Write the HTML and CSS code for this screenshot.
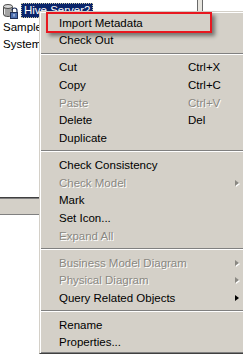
FILE: index.html
```html
<!DOCTYPE html>
<html lang="en">
<head>
  <meta charset="UTF-8" />
  <title>Context menu</title>
  <link rel="stylesheet" href="styles.css">
</head>
<body>

  <div class="top-area">
    <div class="pane-left">
      <div class="tree-row">
        <svg class="db-icon" width="16" height="16" viewBox="0 0 16 16">
          <path d="M1.5 3.5v8c0 1.2 2.2 2 4.5 2s4.5-.8 4.5-2v-8" fill="#a3a3a3" stroke="#4b4b4b"/>
          <ellipse cx="6" cy="3.5" rx="4.5" ry="2" fill="#d8d8d8" stroke="#4b4b4b"/>
          <path d="M2.5 6v5" stroke="#e6e6e6"/>
          <path d="M10 7.5a2.5 2.5 0 0 1 5 0v2" fill="none" stroke="#1f2f58" stroke-width="1.2"/>
          <rect x="8.5" y="9.5" width="7" height="6" fill="#4d6fae" stroke="#1f2f58"/>
          <rect x="11.5" y="11" width="1" height="2.5" fill="#e0e8f8"/>
        </svg>
        <span class="tree-label selected">Hive Server2</span>
      </div>
      <div class="tree-row"><span class="tree-label">Sample</span></div>
      <div class="tree-row"><span class="tree-label">System</span></div>
    </div>
    <div class="split-v"></div>
    <div class="pane-right"></div>
  </div>
  <div class="split-h"></div>
  <div class="bottom-area"></div>

  <!-- menu contextuel par-dessus l'arbre -->
  <div class="menu">
    <div class="item marked"><span>Import Metadata</span></div>
    <div class="item"><span>Check Out</span></div>
    <div class="sep"></div>
    <div class="item"><span>Cut</span><span>Ctrl+X</span></div>
    <div class="item"><span>Copy</span><span>Ctrl+C</span></div>
    <div class="item off"><span>Paste</span><span>Ctrl+V</span></div>
    <div class="item"><span>Delete</span><span>Del</span></div>
    <div class="item"><span>Duplicate</span></div>
    <div class="sep"></div>
    <div class="item"><span>Check Consistency</span></div>
    <div class="item off sub"><span>Check Model</span><span></span><i class="arrow"></i></div>
    <div class="item"><span>Mark</span></div>
    <div class="item"><span>Set Icon...</span></div>
    <div class="item off"><span>Expand All</span></div>
    <div class="sep"></div>
    <div class="item off sub"><span>Business Model Diagram</span><span></span><i class="arrow"></i></div>
    <div class="item off sub"><span>Physical Diagram</span><span></span><i class="arrow"></i></div>
    <div class="item sub"><span>Query Related Objects</span><span></span><i class="arrow"></i></div>
    <div class="sep"></div>
    <div class="item"><span>Rename</span></div>
    <div class="item"><span>Properties...</span></div>
  </div>

</body>
</html>
```

FILE: styles.css
```css
body {
  margin: 0;
  background: #fff;
  font-family: "Liberation Sans", Arial, sans-serif;
  font-size: 11.5px;
  color: #000;
  overflow: hidden;
}

/* Arbre et panneaux derrière le menu */
.top-area {
  display: flex;
  height: 197px;
}

.pane-left {
  width: 197px;
  padding-top: 2px;
}

.tree-row {
  display: flex;
  align-items: center;
  gap: 3px;
  height: 17px;
  padding-left: 3px;
}

.db-icon {
  margin-left: -1px;
  flex: none;
}

.tree-label {
  line-height: 15px;
  white-space: nowrap;
}

.tree-label.selected {
  background: #0a246a;
  color: #fff;
  padding: 0 3px;
  outline: 1px dotted #c8c4a0;
  outline-offset: -1px;
}

.split-v {
  width: 4px;
  border-left: 1px solid #6a6a6a;
  border-right: 1px solid #6a6a6a;
  background: #e8e6e0;
}

.pane-right {
  flex: 1;
}

.split-h {
  height: 17px;
  background: #d4d0c8;
  border-top: 1px solid #404040;
  box-shadow: inset 0 1px #808080, inset 0 -1px #808080;
  border-bottom: 1px solid #fff;
}

.bottom-area {
  height: 140px;
}

/* Menu */
.menu {
  position: absolute;
  left: 39px;
  top: 11px;
  width: 203px;
  padding: 2px 1px;
  background: #d4d0c8;
  border: 1px solid;
  border-color: #d4d0c8 #404040 #404040 #d4d0c8;
  box-shadow: inset 1px 1px #fff, inset -1px -1px #808080;
}

.item {
  position: relative;
  display: grid;
  grid-template-columns: 129px 1fr auto;
  align-items: center;
  height: 17.67px;
  padding: 0 5px 0 18px;
  white-space: nowrap;
}

.item.off {
  color: #8a8882;
  text-shadow: 1px 1px 0 #fff;
}

.arrow {
  width: 0;
  height: 0;
  border-top: 3.5px solid transparent;
  border-bottom: 3.5px solid transparent;
  border-left: 4px solid #000;
}

.item.off .arrow {
  border-left-color: #8a8882;
  filter: drop-shadow(1px 1px 0 #fff);
}

.sep {
  height: 0;
  margin: 3.6px 0 3.7px;
  border-top: 1px solid #808080;
  border-bottom: 1px solid #fff;
}

/* cadre rouge d'annotation */
.item.marked::before {
  content: "";
  position: absolute;
  left: 5px;
  top: -2px;
  width: 162px;
  height: 17px;
  border: 2px solid #e81820;
  box-shadow: 3px 3px 4px rgba(0,0,0,0.45);
}
```
